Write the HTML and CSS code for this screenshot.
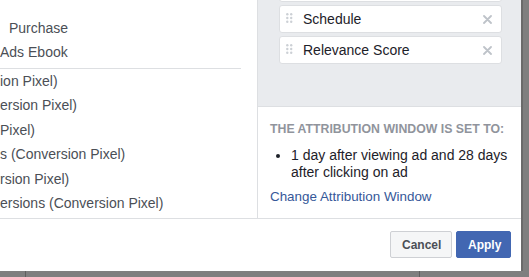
FILE: index.html
```html
<!DOCTYPE html>
<html>
<head>
<meta charset="utf-8">
<link rel="stylesheet" href="styles.css">
</head>
<body>
<div class="modal">
  <div class="main">
    <div class="left">
      <div class="group first">
        <div class="row pad9">Purchase</div>
        <div class="row">Ads Ebook</div>
      </div>
      <div class="group">
        <div class="row">ion Pixel)</div>
        <div class="row">ersion Pixel)</div>
        <div class="row">Pixel)</div>
        <div class="row">s (Conversion Pixel)</div>
        <div class="row">rsion Pixel)</div>
        <div class="row">ersions (Conversion Pixel)</div>
      </div>
    </div>
    <div class="right">
      <div class="columns">
        <div class="cards">
          <div class="card"></div>
          <div class="card">
            <svg class="handle" width="7" height="10" viewBox="0 0 7 10"><g fill="#ccd0d5"><circle cx="1.3" cy="1.3" r="1.2"/><circle cx="5.2" cy="1.3" r="1.2"/><circle cx="1.3" cy="5" r="1.2"/><circle cx="5.2" cy="5" r="1.2"/><circle cx="1.3" cy="8.7" r="1.2"/><circle cx="5.2" cy="8.7" r="1.2"/></g></svg>
            <span class="label">Schedule</span>
            <svg class="close" width="9" height="9" viewBox="0 0 9 9"><path d="M1 1L8 8M8 1L1 8" stroke="#bec3c9" stroke-width="1.8" stroke-linecap="round"/></svg>
          </div>
          <div class="card">
            <svg class="handle" width="7" height="10" viewBox="0 0 7 10"><g fill="#ccd0d5"><circle cx="1.3" cy="1.3" r="1.2"/><circle cx="5.2" cy="1.3" r="1.2"/><circle cx="1.3" cy="5" r="1.2"/><circle cx="5.2" cy="5" r="1.2"/><circle cx="1.3" cy="8.7" r="1.2"/><circle cx="5.2" cy="8.7" r="1.2"/></g></svg>
            <span class="label">Relevance Score</span>
            <svg class="close" width="9" height="9" viewBox="0 0 9 9"><path d="M1 1L8 8M8 1L1 8" stroke="#bec3c9" stroke-width="1.8" stroke-linecap="round"/></svg>
          </div>
        </div>
      </div>
      <div class="attribution">
        <div class="attr-title">THE ATTRIBUTION WINDOW IS SET TO:</div>
        <ul class="attr-list">
          <li>1 day after viewing ad and 28 days after clicking on ad</li>
        </ul>
        <a class="attr-link" href="#">Change Attribution Window</a>
      </div>
    </div>
  </div>
  <div class="footer">
    <button class="btn cancel">Cancel</button>
    <button class="btn apply">Apply</button>
  </div>
</div>
<div class="strip"><div class="strip-cell"></div></div>
</body>
</html>
```

FILE: styles.css
```css
html, body {
  margin: 0;
  padding: 0;
}
body {
  width: 529px;
  height: 277px;
  overflow: hidden;
  background: #7f7f7f;
  font-family: "Liberation Sans", Arial, Helvetica, sans-serif;
}
.modal {
  width: 521px;
  height: 271px;
  background: #fff;
  display: flex;
  flex-direction: column;
  border-right: 2px solid #6a6a6a;
  box-sizing: content-box;
}
.main {
  display: flex;
  height: 218px;
  border-bottom: 1px solid #dddfe2;
}
.left {
  width: 257px;
  border-right: 1px solid #dddfe2;
  overflow: hidden;
  color: #4b4f56;
  font-size: 14px;
}
.group.first {
  padding-top: 16px;
  padding-bottom: 4px;
  margin-right: 16px;
  border-bottom: 1px solid #dddfe2;
}
.row {
  height: 24.4px;
  line-height: 24.4px;
  white-space: nowrap;
}
.first .row {
  height: 24px;
  line-height: 24px;
}
.pad9 {
  padding-left: 9px;
}
.right {
  flex: 1;
  display: flex;
  flex-direction: column;
}
.columns {
  height: 106px;
  background: #e9ebee;
  border-bottom: 1px solid #dddfe2;
  overflow: hidden;
  padding: 0 19px 0 21px;
}
.cards {
  margin-top: -26px;
  display: flex;
  flex-direction: column;
  gap: 3px;
}
.card {
  height: 26px;
  background: #fff;
  border: 1px solid #dddfe2;
  border-radius: 3px;
  display: flex;
  align-items: center;
  padding: 0 9px 0 6px;
  font-size: 14px;
  color: #1d2129;
}
.handle {
  flex: none;
  margin-right: 10px;
  margin-top: -2px;
}
.label {
  flex: 1;
}
.close {
  flex: none;
}
.attribution {
  padding: 15px 12px 0 12px;
}
.attr-title {
  font-size: 12.3px;
  font-weight: bold;
  color: #90949c;
  line-height: 14px;
}
.attr-list {
  margin: 11px 0 0 0;
  padding: 0 0 0 21px;
  font-size: 14px;
  line-height: 16.5px;
  color: #1d2129;
}
.attr-list li {
  padding-left: 0;
}
.attr-link {
  display: block;
  margin-top: 9px;
  font-size: 13.4px;
  line-height: 16px;
  color: #365899;
  text-decoration: none;
}
.footer {
  flex: 1;
  display: flex;
  justify-content: flex-end;
  align-items: flex-start;
  gap: 4px;
  padding: 12px 10px 0 0;
}
.btn {
  height: 27px;
  font-family: "Liberation Sans", Arial, Helvetica, sans-serif;
  font-size: 12px;
  font-weight: bold;
  border-radius: 2px;
  padding: 0 11px;
  cursor: pointer;
}
.cancel {
  width: 62px;
  background: #f5f6f7;
  border: 1px solid #ced0d4;
  color: #4b4f56;
}
.apply {
  width: 55px;
  background: #4267b2;
  border: 1px solid #4267b2;
  color: #fff;
}
.strip {
  height: 6px;
  padding-left: 25px;
}
.strip-cell {
  width: 393px;
  height: 6px;
  border-left: 1px solid #5f5f5f;
  border-right: 1px solid #5f5f5f;
}
```
